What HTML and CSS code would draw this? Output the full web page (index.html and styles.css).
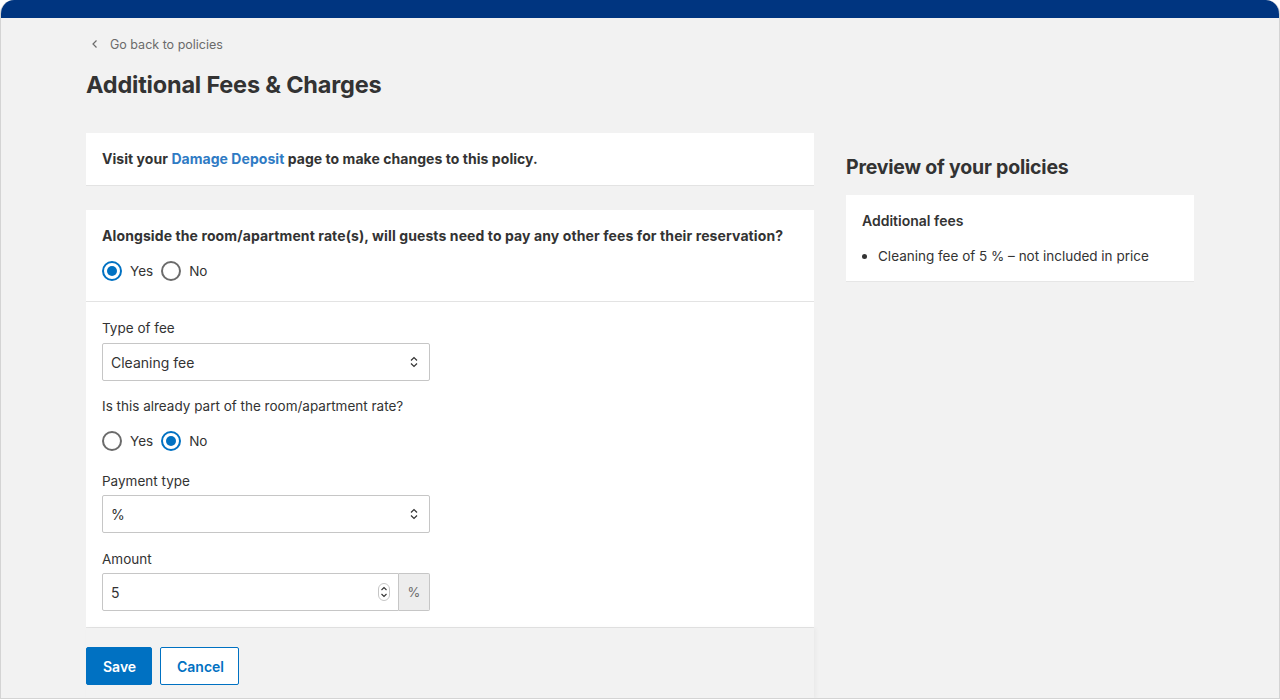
FILE: index.html
```html
<!DOCTYPE html>
<html lang="en">
<head>
<meta charset="utf-8">
<title>Additional Fees &amp; Charges</title>
<link rel="stylesheet" href="styles.css">
</head>
<body>
<div class="frame">
  <div class="topbar"></div>
  <div class="page">
    <a class="back" href="#">
      <svg class="back-icon" width="8" height="10" viewBox="0 0 8 10"><path d="M5.5 1.5 2 5l3.5 3.5" fill="none" stroke="#6b6b6b" stroke-width="1.2"/></svg>
      <span>Go back to policies</span>
    </a>
    <h1 class="title">Additional Fees &amp; Charges</h1>
    <div class="columns">
      <div class="main">
        <div class="card notice">Visit your <a href="#" class="link">Damage Deposit</a> page to make changes to this policy.</div>
        <div class="card form">
          <div class="section">
            <div class="question">Alongside the room/apartment rate(s), will guests need to pay any other fees for their reservation?</div>
            <div class="radios">
              <label class="radio"><span class="dot checked"></span>Yes</label>
              <label class="radio"><span class="dot"></span>No</label>
            </div>
          </div>
          <div class="section fields">
            <div class="field f1">
              <div class="label">Type of fee</div>
              <div class="select">
                <span>Cleaning fee</span>
                <svg width="10" height="12" viewBox="0 0 10 12"><path d="M2 4.5 5 1.5l3 3M2 7.5l3 3 3-3" fill="none" stroke="#333" stroke-width="1.2"/></svg>
              </div>
            </div>
            <div class="field f2">
              <div class="label">Is this already part of the room/apartment rate?</div>
              <div class="radios">
                <label class="radio"><span class="dot"></span>Yes</label>
                <label class="radio"><span class="dot checked"></span>No</label>
              </div>
            </div>
            <div class="field f3">
              <div class="label">Payment type</div>
              <div class="select">
                <span>%</span>
                <svg width="10" height="12" viewBox="0 0 10 12"><path d="M2 4.5 5 1.5l3 3M2 7.5l3 3 3-3" fill="none" stroke="#333" stroke-width="1.2"/></svg>
              </div>
            </div>
            <div class="field f4">
              <div class="label">Amount</div>
              <div class="input-group">
                <div class="input">
                  <span>5</span>
                  <span class="spinner">
                    <svg width="12" height="18" viewBox="0 0 12 18"><rect x="0.5" y="0.5" width="11" height="17" rx="5.5" fill="#fff" stroke="#c6c6c6"/><path d="M3.5 7 6 4.5 8.5 7M3.5 11 6 13.5 8.5 11" fill="none" stroke="#333" stroke-width="1.1"/></svg>
                  </span>
                </div>
                <div class="addon">%</div>
              </div>
            </div>
          </div>
        </div>
        <div class="footer">
          <button class="btn primary">Save</button>
          <button class="btn secondary">Cancel</button>
        </div>
      </div>
      <aside class="side">
        <h2 class="side-title">Preview of your policies</h2>
        <div class="card preview">
          <div class="preview-title">Additional fees</div>
          <ul class="preview-list">
            <li>Cleaning fee of 5 % – not included in price</li>
          </ul>
        </div>
      </aside>
    </div>
  </div>
</div>
</body>
</html>
```

FILE: styles.css
```css
* { box-sizing: border-box; }
html, body { margin: 0; padding: 0; background: #fff; }
body {
  font-family: Inter, "Noto Sans", "Liberation Sans", sans-serif;
  color: #333;
  font-size: 14px;
}
.frame {
  width: 1280px;
  height: 699px;
  background: #f2f2f2;
  border: 1px solid #d4d4d4;
  border-top: none;
  border-radius: 14px 14px 0 0;
  overflow: hidden;
}
.topbar {
  height: 18px;
  background: #003580;
}
.page {
  padding: 0 0 0 85px;
}
.back {
  display: flex;
  align-items: center;
  gap: 11px;
  height: 16px;
  margin-top: 18px;
  margin-left: 5px;
  color: #6b6b6b;
  font-size: 12.5px;
  text-decoration: none;
}
.title {
  margin: 18px 0 0 0;
  font-size: 23.5px;
  font-weight: 700;
  letter-spacing: -0.2px;
  line-height: 30px;
  color: #333;
}
.columns {
  display: flex;
  gap: 32px;
  margin-top: 33px;
}
.main {
  width: 728px;
}
.card {
  background: #fff;
  border-bottom: 1px solid #e3e3e3;
}
.notice {
  height: 53px;
  padding: 0 16px;
  line-height: 52px;
  font-weight: 700;
  font-size: 14px;
  letter-spacing: 0.05px;
}
.link { color: #2f7bc4; text-decoration: none; }
.form {
  margin-top: 24px;
}
.section {
  padding: 16px 16px 0;
}
.section:first-child {
  height: 92px;
  border-bottom: 1px solid #e3e3e3;
}
.question {
  font-weight: 700;
  font-size: 14px;
  line-height: 20px;
  letter-spacing: 0.1px;
}
.radios {
  display: flex;
  gap: 8px;
  margin-top: 15px;
  align-items: center;
}
.radio {
  display: flex;
  align-items: center;
  gap: 8px;
  height: 20px;
  font-size: 13.5px;
}
.dot {
  width: 20px;
  height: 20px;
  border-radius: 50%;
  border: 2px solid #6b6b6b;
  background: #fff;
  position: relative;
}
.dot.checked { border-color: #0071c2; }
.dot.checked::after {
  content: "";
  position: absolute;
  left: 3px; top: 3px;
  width: 10px; height: 10px;
  border-radius: 50%;
  background: #0071c2;
}
.fields {
  padding-top: 16px;
  padding-bottom: 16px;
}
.label {
  font-size: 13.5px;
  line-height: 20px;
  margin-bottom: 4px;
}
.f1 .label { margin-bottom: 5px; }
.f2 { margin-top: 15px; }
.f2 .label { margin-bottom: 0; }
.f3 { margin-top: 20px; }
.f4 { margin-top: 16px; }
.select, .input {
  width: 328px;
  height: 38px;
  border: 1px solid #c6c6c6;
  border-radius: 2px;
  background: #fff;
  display: flex;
  align-items: center;
  justify-content: space-between;
  padding: 0 10px 0 8px;
  font-size: 14px;
}
.input-group {
  display: flex;
  width: 328px;
}
.input {
  width: 297px;
  border-radius: 2px 0 0 2px;
  padding-right: 8px;
}
.spinner { display: flex; }
.addon {
  width: 31px;
  height: 38px;
  border: 1px solid #c6c6c6;
  border-left: none;
  background: #ededed;
  color: #6b6b6b;
  display: flex;
  align-items: center;
  justify-content: center;
  border-radius: 0 2px 2px 0;
  font-size: 13px;
}
.footer {
  display: flex;
  gap: 8px;
  padding-top: 19px;
  height: 71px;
  box-shadow: 2px 0 4px rgba(0,0,0,0.04);
}
.btn {
  height: 38px;
  font-family: inherit;
  font-size: 14px;
  font-weight: 600;
  border-radius: 2px;
  padding: 0 16px;
  cursor: pointer;
}
.primary {
  background: #0071c2;
  border: 1px solid #0071c2;
  color: #fff;
  width: 66px;
}
.secondary {
  background: #fff;
  border: 1px solid #0071c2;
  color: #0071c2;
  width: 79px;
}
.side {
  width: 348px;
  padding-top: 20px;
}
.side-title {
  margin: 0;
  font-size: 19.5px;
  font-weight: 700;
  line-height: 28px;
  letter-spacing: -0.2px;
}
.preview {
  margin-top: 14px;
  padding: 16px 16px 15px;
  border-bottom: 1px solid #e6e6e6;
}
.preview-title {
  font-weight: 600;
  font-size: 14px;
  line-height: 20px;
}
.preview-list {
  margin: 15px 0 0;
  padding: 0 0 0 16px;
  font-size: 13.5px;
  line-height: 20px;
}
.preview-list li::marker { font-size: 14px; }
```
